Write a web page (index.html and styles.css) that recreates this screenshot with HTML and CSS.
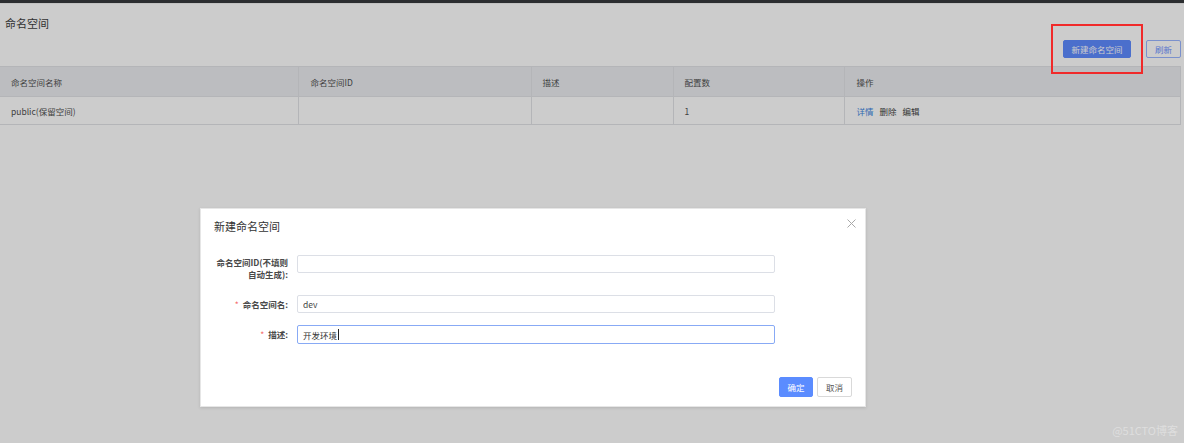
FILE: index.html
```html
<!DOCTYPE html>
<html lang="zh-CN">
<head>
<meta charset="utf-8">
<title>命名空间</title>
<link rel="stylesheet" href="styles.css">
</head>
<body>
<div class="topbar"></div>
<main class="page">
  <h1 class="page-title">命名空间</h1>
  <div class="toolbar">
    <button class="btn btn-primary">新建命名空间</button>
    <button class="btn btn-outline">刷新</button>
  </div>
  <table class="ns-table">
    <colgroup>
      <col class="c1"><col class="c2"><col class="c3"><col class="c4"><col>
    </colgroup>
    <thead>
      <tr><th>命名空间名称</th><th>命名空间ID</th><th>描述</th><th>配置数</th><th>操作</th></tr>
    </thead>
    <tbody>
      <tr>
        <td>public(保留空间)</td><td></td><td></td><td>1</td>
        <td class="ops"><a class="op-link">详情</a><span class="op">删除</span><span class="op">编辑</span></td>
      </tr>
    </tbody>
  </table>
</main>
<div class="mask"></div>
<div class="highlight-box"></div>
<section class="dialog">
  <header class="dialog-header">
    <h2 class="dialog-title">新建命名空间</h2>
    <svg class="dialog-close" width="9" height="9" viewBox="0 0 9 9"><path d="M0.5 0.5 L8.5 8.5 M8.5 0.5 L0.5 8.5" stroke="#a8a8a8" stroke-width="1" fill="none"/></svg>
  </header>
  <form class="dialog-form">
    <div class="form-row row-tall">
      <label class="form-label">命名空间ID(不填则<br>自动生成):</label>
      <input class="form-input" type="text" value="">
    </div>
    <div class="form-row">
      <label class="form-label"><span class="req">*</span>命名空间名:</label>
      <input class="form-input" type="text" value="dev">
    </div>
    <div class="form-row">
      <label class="form-label"><span class="req">*</span>描述:</label>
      <div class="form-input is-focus">开发环境<span class="caret"></span></div>
    </div>
  </form>
  <footer class="dialog-footer">
    <button class="btn btn-confirm">确定</button>
    <button class="btn btn-cancel">取消</button>
  </footer>
</section>
<div class="watermark">@51CTO博客</div>
</body>
</html>
```
FILE: styles.css
```css
* { box-sizing: border-box; }
html, body { margin: 0; padding: 0; }
body {
  width: 1184px;
  height: 443px;
  overflow: hidden;
  background: #ffffff;
  font-family: "Noto Sans CJK SC", "Noto Sans", sans-serif;
  color: #555;
  position: relative;
}
.topbar {
  height: 4px;
  background: #36393d;
  border-bottom: 1px solid #f2f2f2;
}
.page {
  width: 1181px;
  padding: 0;
}
.page-title {
  margin: 12px 0 0 5px;
  font-size: 11px;
  line-height: 14px;
  font-weight: normal;
  color: #404040;
}
.toolbar {
  display: flex;
  justify-content: flex-end;
  gap: 15px;
  margin-top: 10px;
  margin-bottom: 8px;
}
.btn {
  font-family: inherit;
  font-size: 8.5px;
  height: 18px;
  line-height: 16px;
  padding: 0;
  border-radius: 2px;
  cursor: pointer;
}
.btn-primary {
  width: 68px;
  background: #5e8bff;
  border: 1px solid #5e8bff;
  color: #fff;
}
.btn-outline {
  width: 35px;
  background: #fff;
  border: 1px solid #9ab6ff;
  color: #7095ff;
}
.ns-table {
  width: 1181px;
  border-collapse: collapse;
  table-layout: fixed;
  font-size: 8.5px;
  color: #4f4f4f;
}
.ns-table col.c1 { width: 298px; }
.ns-table col.c2 { width: 233px; }
.ns-table col.c3 { width: 142px; }
.ns-table col.c4 { width: 171px; }
.ns-table th, .ns-table td {
  text-align: left;
  font-weight: normal;
  padding: 0 11px;
  border: 1px solid #e2e3e6;
  border-left: none;
}
.ns-table th + th, .ns-table td + td { border-left: 1px solid #e2e3e6; }
.ns-table th {
  height: 30px;
  background: #ecedf0;
}
.ns-table td {
  height: 28px;
  background: #fff;
}
.ns-table td.ops { padding-left: 12px; }
.ns-table th:nth-child(2), .ns-table th:nth-child(5) { padding-left: 12px; }
.op-link { color: #3c86e0; margin-right: 6px; }
.op { color: #444; margin-right: 6px; }

.mask {
  position: absolute;
  inset: 0;
  background: rgba(0, 0, 0, 0.2);
  z-index: 2;
}
.highlight-box {
  position: absolute;
  left: 1051px;
  top: 24px;
  width: 92px;
  height: 50px;
  border: 2px solid #f02a2a;
  z-index: 3;
}
.dialog {
  position: absolute;
  left: 200px;
  top: 208px;
  width: 666px;
  height: 199px;
  background: #fff;
  border: 1px solid #e6e6e6;
  box-shadow: 0 1px 3px rgba(0, 0, 0, 0.12);
  z-index: 3;
  display: flex;
  flex-direction: column;
}
.dialog-header {
  display: flex;
  justify-content: space-between;
  align-items: flex-start;
  padding: 9px 9px 0 13px;
}
.dialog-title {
  margin: 0;
  font-size: 11px;
  line-height: 16px;
  font-weight: normal;
  color: #333;
}
.dialog-close { margin-top: 1px; }
.dialog-form {
  margin-top: 21px;
  display: flex;
  flex-direction: column;
  gap: 12px;
}
.form-row {
  display: flex;
  align-items: flex-start;
}
.form-label {
  width: 96px;
  padding-right: 9px;
  text-align: right;
  font-size: 8.5px;
  line-height: 12px;
  padding-top: 3px;
  color: #4a4a4a;
  font-weight: 600;
}
.row-tall .form-label {
  padding-top: 1px;
  height: 28px;
}
.req {
  color: #f56c6c;
  margin-right: 4px;
  font-weight: normal;
}
.form-input {
  width: 478px;
  height: 18px;
  border: 1px solid #dcdfe6;
  border-radius: 2px;
  padding: 0 5px;
  font-family: inherit;
  font-size: 8.5px;
  line-height: 16px;
  color: #444;
  background: #fff;
  outline: none;
}
.form-input.is-focus {
  height: 19px;
  border-color: #88aaf5;
  display: flex;
  align-items: center;
  color: #333;
}
.caret {
  display: inline-block;
  width: 1px;
  height: 11px;
  background: #222;
  margin-left: 1px;
}
.dialog-footer {
  margin-top: auto;
  display: flex;
  justify-content: flex-end;
  gap: 4px;
  padding: 0 13px 9px 0;
}
.btn-confirm {
  width: 34px;
  height: 20px;
  background: #5b8cff;
  border: 1px solid #5b8cff;
  color: #fff;
}
.btn-cancel {
  width: 35px;
  height: 20px;
  background: #fff;
  border: 1px solid #d9d9d9;
  color: #555;
}
.watermark {
  position: absolute;
  right: 6px;
  bottom: 7px;
  font-size: 11px;
  line-height: 12px;
  color: #dedede;
  z-index: 4;
  font-family: "Noto Sans CJK SC", sans-serif;
}
```
